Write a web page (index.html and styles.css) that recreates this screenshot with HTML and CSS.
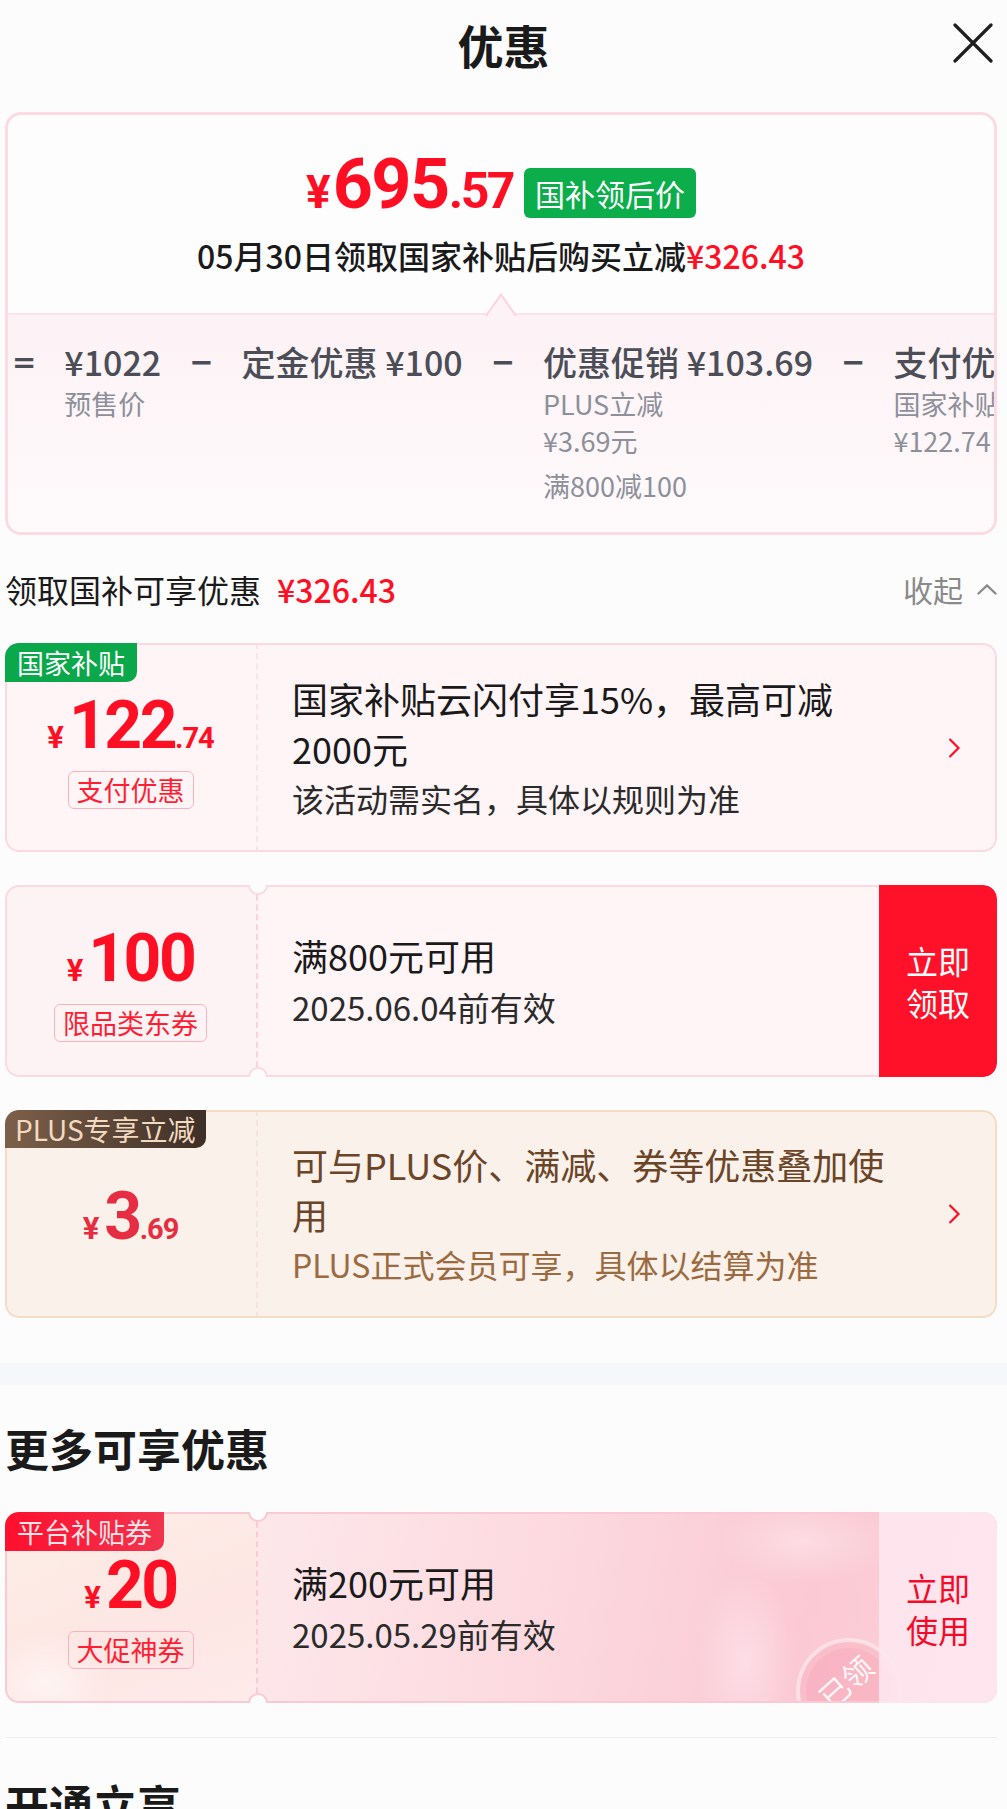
FILE: index.html
```html
<!DOCTYPE html>
<html lang="zh-CN">
<head>
<meta charset="utf-8">
<title>优惠</title>
<link rel="stylesheet" href="styles.css">
</head>
<body>
<header class="topbar">
  <h1 class="topbar-title">优惠</h1>
  <button class="close-btn" aria-label="关闭">
    <svg width="40" height="40" viewBox="0 0 40 40"><path d="M2 2 L38 38 M38 2 L2 38" stroke="#1f1f1f" stroke-width="3.2" stroke-linecap="round" fill="none"/></svg>
  </button>
</header>

<main class="page">
  <section class="summary">
    <div class="summary-top">
      <div class="final-price-row">
        <span class="final-price"><span class="fp-yen">¥</span><span class="fp-int">695</span><span class="fp-dec">.57</span></span>
        <span class="badge-green">国补领后价</span>
      </div>
      <p class="summary-note">05月30日领取国家补贴后购买立减<span class="red">¥326.43</span></p>
    </div>
    <div class="summary-bottom">
      <svg class="notch-tri" width="32" height="24" viewBox="0 0 32 24"><polygon points="0,24 16,1 32,24" fill="#fdf3f6"/><path d="M1 23 L16 1.5 L31 23" stroke="#fcd3dd" stroke-width="2" fill="none"/></svg>
      <div class="calc-row">
        <span class="op">=</span>
        <div class="calc-item"><div class="calc-main">¥1022</div><div class="calc-sub">预售价</div></div>
        <span class="op">−</span>
        <div class="calc-item"><div class="calc-main">定金优惠 ¥100</div></div>
        <span class="op">−</span>
        <div class="calc-item"><div class="calc-main">优惠促销 ¥103.69</div><div class="calc-sub">PLUS立减</div><div class="calc-sub">¥3.69元</div><div class="calc-sub calc-gap">满800减100</div></div>
        <span class="op">−</span>
        <div class="calc-item"><div class="calc-main">支付优惠 ¥122.74</div><div class="calc-sub">国家补贴</div><div class="calc-sub">¥122.74</div></div>
      </div>
    </div>
  </section>

  <div class="group-head">
    <div class="group-title">领取国补可享优惠<span class="red group-amount">¥326.43</span></div>
    <div class="fold">收起<svg width="20" height="11" viewBox="0 0 20 11"><path d="M1.5 9.5 L10 1.5 L18.5 9.5" stroke="#8a8a8a" stroke-width="2.4" fill="none" stroke-linecap="round"/></svg></div>
  </div>

  <div class="coupons">
    <article class="coupon coupon-gov">
      <span class="coupon-tag tag-green">国家补贴</span>
      <div class="coupon-left">
        <div class="amount"><span class="amt-yen">¥</span><span class="amt-int">122</span><span class="amt-dec">.74</span></div>
        <span class="amt-label">支付优惠</span>
      </div>
      <div class="coupon-body">
        <div class="coupon-text">
          <p class="coupon-title">国家补贴云闪付享15%，最高可减2000元</p>
          <p class="coupon-desc">该活动需实名，具体以规则为准</p>
        </div>
      </div>
      <svg class="coupon-arrow" width="14" height="22" viewBox="0 0 14 22"><path d="M2.5 2 L11.5 11 L2.5 20" stroke="#ff0f23" stroke-width="2.2" fill="none"/></svg>
    </article>

    <article class="coupon coupon-jd">
      <span class="notch notch-top"></span><span class="notch notch-bottom"></span>
      <div class="coupon-left">
        <div class="amount"><span class="amt-yen">¥</span><span class="amt-int">100</span></div>
        <span class="amt-label">限品类东券</span>
      </div>
      <div class="coupon-body">
        <div class="coupon-text">
          <p class="coupon-title">满800元可用</p>
          <p class="coupon-desc coupon-date">2025.06.04前有效</p>
        </div>
      </div>
      <button class="coupon-btn btn-solid">立即领取</button>
    </article>

    <article class="coupon coupon-plus">
      <span class="coupon-tag tag-plus">PLUS专享立减</span>
      <div class="coupon-left">
        <div class="amount"><span class="amt-yen">¥</span><span class="amt-int">3</span><span class="amt-dec">.69</span></div>
      </div>
      <div class="coupon-body">
        <div class="coupon-text">
          <p class="coupon-title">可与PLUS价、满减、券等优惠叠加使用</p>
          <p class="coupon-desc">PLUS正式会员可享，具体以结算为准</p>
        </div>
      </div>
      <svg class="coupon-arrow" width="14" height="22" viewBox="0 0 14 22"><path d="M2.5 2 L11.5 11 L2.5 20" stroke="#ff0f23" stroke-width="2.2" fill="none"/></svg>
    </article>
  </div>
</main>

<div class="band"></div>

<section class="page more">
  <h2 class="section-heading">更多可享优惠</h2>
  <article class="coupon coupon-platform">
    <span class="notch notch-top"></span><span class="notch notch-bottom"></span>
    <span class="coupon-tag tag-red">平台补贴券</span>
    <div class="coupon-left">
      <div class="amount"><span class="amt-yen">¥</span><span class="amt-int">20</span></div>
      <span class="amt-label">大促神券</span>
    </div>
    <div class="coupon-body">
      <div class="coupon-text">
        <p class="coupon-title">满200元可用</p>
        <p class="coupon-desc coupon-date">2025.05.29前有效</p>
      </div>
    </div>
    <div class="stamp"><span class="stamp-inner"><span class="stamp-text">已领</span></span></div>
    <button class="coupon-btn btn-light">立即使用</button>
  </article>
  <hr class="rule">
  <h2 class="section-heading open-heading">开通立享</h2>
</section>
</body>
</html>
```

FILE: styles.css
```css
* { box-sizing: border-box; }

body {
  margin: 0;
  width: 1007px;
  overflow: hidden;
  background: #fcfcfc;
  color: #1a1a1a;
  font-family: "Noto Sans CJK SC", "Noto Sans", sans-serif;
}

p { margin: 0; }

.red { color: #ff0f23; }

/* top bar */
.topbar {
  position: relative;
  height: 88px;
  display: flex;
  align-items: center;
  justify-content: center;
}
.topbar-title {
  margin: 0;
  font-size: 46px;
  font-weight: 700;
  line-height: 88px;
}
.close-btn {
  position: absolute;
  right: 14px;
  top: 23px;
  width: 40px;
  height: 40px;
  padding: 0;
  border: 0;
  background: none;
}

.page { padding: 0 10px 0 5px; }

/* summary card */
.summary {
  margin-top: 24px;
  border: 3px solid #fdd9e1;
  border-radius: 16px;
  overflow: hidden;
  background: #fdfdfd;
}
.summary-top {
  padding: 44px 0 38px;
  text-align: center;
}
.final-price-row {
  display: flex;
  justify-content: center;
  align-items: center;
  gap: 11px;
  height: 68px;
}
.final-price {
  font-family: Roboto, sans-serif;
  font-weight: 700;
  color: #ff0f23;
  line-height: 68px;
  white-space: nowrap;
}
.fp-yen { font-size: 46px; margin-right: 2px; }
.fp-int { font-size: 70px; letter-spacing: -1.5px; }
.fp-dec { font-size: 50px; letter-spacing: -2.5px; }
.badge-green {
  height: 50px;
  line-height: 50px;
  padding: 0 11px;
  border-radius: 6px;
  background: #0bae4b;
  color: #fff;
  font-size: 30px;
}
.summary-note {
  margin-top: 8px;
  font-size: 32px;
  line-height: 40px;
  font-weight: 500;
}

.summary-bottom {
  position: relative;
  border-top: 2px solid #fde3e9;
  background: linear-gradient(#fdf2f5, #fefafb);
  padding: 24px 0 28px 4px;
}
.notch-tri {
  position: absolute;
  top: -22px;
  left: 50%;
  transform: translateX(-50%);
}
.calc-row {
  display: flex;
  align-items: flex-start;
  gap: 28px;
  white-space: nowrap;
}
.calc-row > * { flex-shrink: 0; }
.op {
  font-family: "DejaVu Sans", sans-serif;
  font-weight: 700;
  font-size: 29px;
  line-height: 46px;
  color: #4b4e57;
}
.calc-main {
  font-size: 34px;
  line-height: 46px;
  font-weight: 500;
  color: #4b4e57;
}
.calc-sub {
  font-size: 27px;
  line-height: 37px;
  color: #8d909a;
}
.calc-gap { margin-top: 8px; }

/* group header */
.group-head {
  display: flex;
  align-items: center;
  justify-content: space-between;
  height: 44px;
  margin-top: 32px;
}
.group-title {
  font-size: 32px;
  line-height: 44px;
}
.group-amount { margin-left: 16px; font-weight: 500; }
.fold {
  display: flex;
  align-items: center;
  gap: 14px;
  font-size: 30px;
  color: #8a8a8a;
}

/* coupons */
.coupons {
  display: flex;
  flex-direction: column;
  gap: 33px;
  margin-top: 32px;
}
.coupon {
  --bd: #fcd9e1;
  position: relative;
  display: flex;
  align-items: stretch;
  border-radius: 14px;
  overflow: hidden;
  background: #fff5f7;
}
.coupon::after {
  content: "";
  position: absolute;
  inset: 0;
  border: 2px solid var(--bd);
  border-radius: 14px;
  pointer-events: none;
  z-index: 2;
}
.coupon-gov { height: 209px; }
.coupon-jd { height: 192px; }
.coupon-plus { height: 208px; }
.coupon-platform { height: 191px; }

.notch {
  position: absolute;
  left: 243px;
  width: 20px;
  height: 20px;
  border-radius: 50%;
  background: #fcfcfc;
  border: 2px solid var(--bd);
  z-index: 3;
}
.notch-top { top: -10px; }
.notch-bottom { bottom: -10px; }

.coupon-tag {
  position: absolute;
  top: 0;
  left: 0;
  z-index: 3;
  height: 39px;
  line-height: 39px;
  padding: 0 12px;
  font-size: 27px;
  border-radius: 12px 0 10px 0;
  white-space: nowrap;
}
.tag-green { background: #0aa84a; color: #fff; }
.tag-plus {
  height: 38px;
  line-height: 38px;
  padding: 0 10px;
  font-size: 28px;
  background: linear-gradient(90deg, #7d604a, #3d2f27);
  color: #f3d9c0;
}
.tag-red {
  padding: 0 12px;
  background: linear-gradient(90deg, #ff0f2e, #f2344e);
  color: #ffe4e8;
}

.coupon-left {
  width: 253px;
  flex-shrink: 0;
  display: flex;
  flex-direction: column;
  align-items: center;
  justify-content: center;
  padding-top: 6px;
  border-right: 2px dashed #fbe4e9;
}
.coupon-jd .coupon-left { background: #fdf3f5; border-right-color: #fad2dc; }

.amount {
  font-family: Roboto, sans-serif;
  font-weight: 700;
  color: #ff0f23;
  line-height: 66px;
  height: 66px;
  white-space: nowrap;
}
.amt-yen { font-size: 31px; margin-right: 5px; }
.amt-int { font-size: 66px; letter-spacing: -2.5px; }
.amt-dec { font-size: 29px; letter-spacing: -1px; }
.amt-label {
  margin-top: 12px;
  height: 38px;
  line-height: 35px;
  padding: 0 8px;
  border: 1.5px solid #f9b3bf;
  border-radius: 6px;
  color: #ff1f35;
  font-size: 27px;
  white-space: nowrap;
}

.coupon-body {
  flex: 1;
  display: flex;
  align-items: center;
  padding-left: 34px;
  min-width: 0;
}
.coupon-text { max-width: 600px; }
.coupon-title {
  font-size: 36px;
  line-height: 50px;
  color: #1a1a1a;
}
.coupon-desc {
  font-size: 32px;
  line-height: 50px;
  color: #2b2b2b;
}
.coupon-date { margin-top: 2px; font-size: 33px; }

.coupon-arrow {
  flex-shrink: 0;
  align-self: center;
  margin-right: 36px;
}

.coupon-btn {
  position: relative;
  z-index: 3;
  flex-shrink: 0;
  width: 118px;
  padding: 0 27px;
  border: 0;
  font-family: inherit;
  font-size: 32px;
  line-height: 42px;
  text-align: center;
}
.btn-solid {
  background: #ff1229;
  color: #fff;
  border-radius: 0 14px 14px 0;
}
.btn-light {
  background: rgba(254, 231, 239, 0.9);
  color: #f20c2a;
}

/* PLUS coupon */
.coupon-plus {
  --bd: #f5dcc6;
  background: #f9f1ea;
}
.coupon-plus .coupon-left { border-right-color: #f5e5d8; }
.coupon-plus .amount { color: #e62d42; }
.coupon-plus .coupon-title { color: #6b4528; }
.coupon-plus .coupon-desc { color: #9b6a41; }

/* band + more */
.band {
  height: 22px;
  margin-top: 45px;
  background: #f6f7fa;
}
.section-heading {
  margin: 33px 0 0;
  font-size: 44px;
  line-height: 60px;
  font-weight: 700;
}
.coupon-platform {
  --bd: #fbc9d3;
  margin-top: 34px;
  background:
    radial-gradient(ellipse 120px 60px at 800px 30px, rgba(255,255,255,0.35), transparent 70%),
    radial-gradient(ellipse 70px 130px at 740px 150px, rgba(255,235,245,0.55), transparent 70%),
    linear-gradient(100deg, #fde7ea 25%, #fcd9df 55%, #fbc9d3 80%, #fcd3db 100%);
}
.coupon-platform .coupon-left {
  border-right-color: #f9ccd5;
  background:
    radial-gradient(ellipse 90px 70px at 40px 170px, rgba(255,255,255,0.55), transparent 70%),
    linear-gradient(160deg, #fdeee7, #fde6e3 60%, #fdebea);
}
.stamp {
  position: absolute;
  left: 791px;
  top: 126px;
  width: 106px;
  height: 106px;
  border-radius: 50%;
  border: 4px solid rgba(255, 255, 255, 0.5);
  background: rgba(249, 168, 184, 0.35);
  display: flex;
  align-items: center;
  justify-content: center;
  z-index: 1;
}
.stamp-inner {
  width: 86px;
  height: 86px;
  border-radius: 50%;
  background: rgba(248, 160, 178, 0.3);
  display: flex;
  align-items: center;
  justify-content: center;
}
.stamp-text {
  color: rgba(255, 255, 255, 0.92);
  font-size: 30px;
  line-height: 36px;
  transform: translate(-4px, -10px) rotate(-42deg);
}
.rule {
  margin: 34px 0 0;
  border: 0;
  height: 1px;
  background: #efefef;
}
.open-heading { margin-top: 36px; }
```
